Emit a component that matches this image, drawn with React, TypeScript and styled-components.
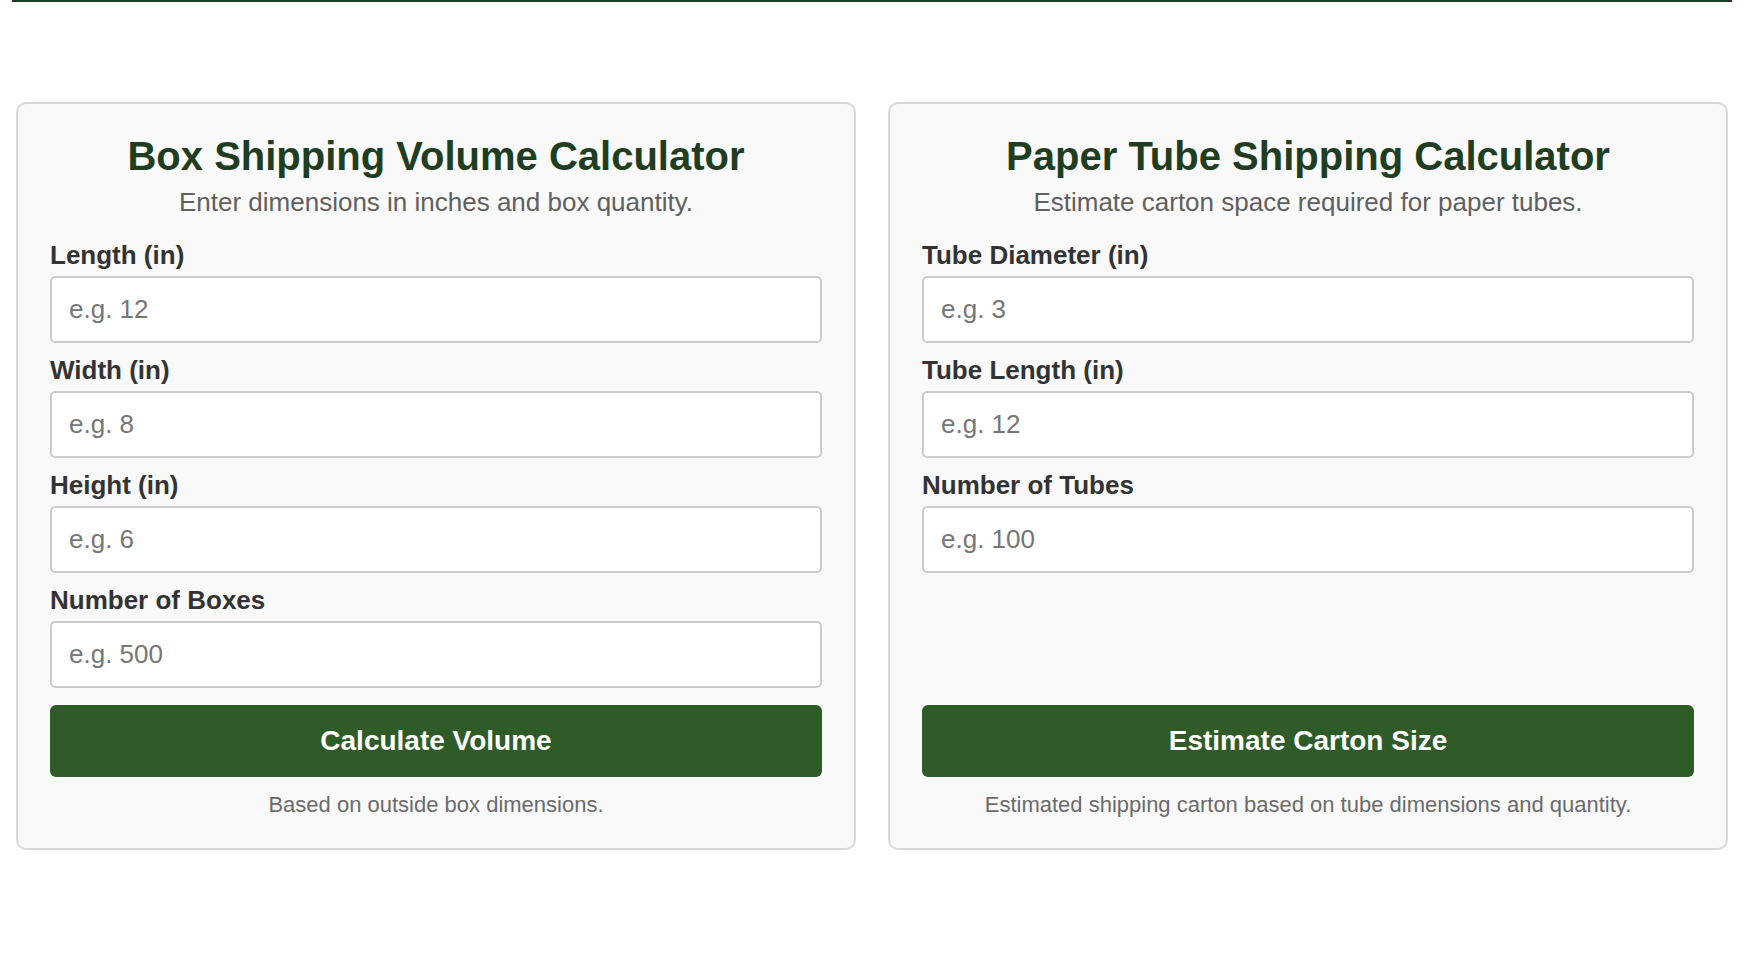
import styled, { createGlobalStyle } from "styled-components"

const GlobalStyle = createGlobalStyle`
  * {
    box-sizing: border-box;
  }
  body {
    margin: 0;
    background: #ffffff;
    font-family: "Liberation Sans", Arial, Helvetica, sans-serif;
  }
`

const Page = styled.div`
  width: 1720px;
  margin-left: 12px;
`

const TopRule = styled.div`
  height: 2px;
  background-color: #1f3d21;
`

const CardGrid = styled.div`
  display: grid;
  grid-template-columns: 1fr 1fr;
  gap: 32px;
  padding: 100px 4px 0;
`

const Card = styled.section`
  display: flex;
  flex-direction: column;
  background-color: #f9f9f9;
  border: 2px solid #d9d9d9;
  border-radius: 10px;
  padding: 29px 32px 30px;
`

const Title = styled.h2`
  margin: 0;
  text-align: center;
  font-size: 40px;
  font-weight: 700;
  line-height: 46px;
  color: #1f3d1f;
`

const Subtitle = styled.p`
  margin: 9px 0 23px;
  text-align: center;
  font-size: 26px;
  line-height: 29px;
  color: #606060;
`

const Field = styled.div`
  display: flex;
  flex-direction: column;
  gap: 6px;
  margin-bottom: 12px;
`

const Label = styled.label`
  font-size: 26px;
  font-weight: 700;
  line-height: 30px;
  color: #333333;
`

const Input = styled.input`
  height: 67px;
  width: 100%;
  padding: 0 17px;
  border: 2px solid #cccccc;
  border-radius: 5px;
  background: #ffffff;
  font-family: inherit;
  font-size: 26px;
  color: #222222;
  outline: none;

  &::placeholder {
    color: #767676;
  }
`

const Actions = styled.div`
  margin-top: auto;
  padding-top: 5px;
`

const Button = styled.button`
  display: block;
  width: 100%;
  height: 72px;
  border: none;
  border-radius: 6px;
  background-color: #2e5b28;
  color: #ffffff;
  font-family: inherit;
  font-size: 28px;
  font-weight: 700;
  cursor: pointer;
`

const Note = styled.p`
  margin: 15px 0 0;
  text-align: center;
  font-size: 22px;
  line-height: 26px;
  color: #6b6b6b;
`

interface FieldSpec {
  label: string
  placeholder: string
}

interface CalculatorProps {
  title: string
  subtitle: string
  fields: FieldSpec[]
  action: string
  note: string
}

function Calculator({ title, subtitle, fields, action, note }: CalculatorProps) {
  return (
    <Card>
      <Title>{title}</Title>
      <Subtitle>{subtitle}</Subtitle>
      {fields.map((f) => (
        <Field key={f.label}>
          <Label>{f.label}</Label>
          <Input type="number" placeholder={f.placeholder} />
        </Field>
      ))}
      <Actions>
        <Button type="button">{action}</Button>
        <Note>{note}</Note>
      </Actions>
    </Card>
  )
}

export default function App() {
  return (
    <Page>
      <GlobalStyle />
      <TopRule />
      <CardGrid>
        <Calculator
          title="Box Shipping Volume Calculator"
          subtitle="Enter dimensions in inches and box quantity."
          fields={[
            { label: "Length (in)", placeholder: "e.g. 12" },
            { label: "Width (in)", placeholder: "e.g. 8" },
            { label: "Height (in)", placeholder: "e.g. 6" },
            { label: "Number of Boxes", placeholder: "e.g. 500" },
          ]}
          action="Calculate Volume"
          note="Based on outside box dimensions."
        />
        <Calculator
          title="Paper Tube Shipping Calculator"
          subtitle="Estimate carton space required for paper tubes."
          fields={[
            { label: "Tube Diameter (in)", placeholder: "e.g. 3" },
            { label: "Tube Length (in)", placeholder: "e.g. 12" },
            { label: "Number of Tubes", placeholder: "e.g. 100" },
          ]}
          action="Estimate Carton Size"
          note="Estimated shipping carton based on tube dimensions and quantity."
        />
      </CardGrid>
    </Page>
  )
}
